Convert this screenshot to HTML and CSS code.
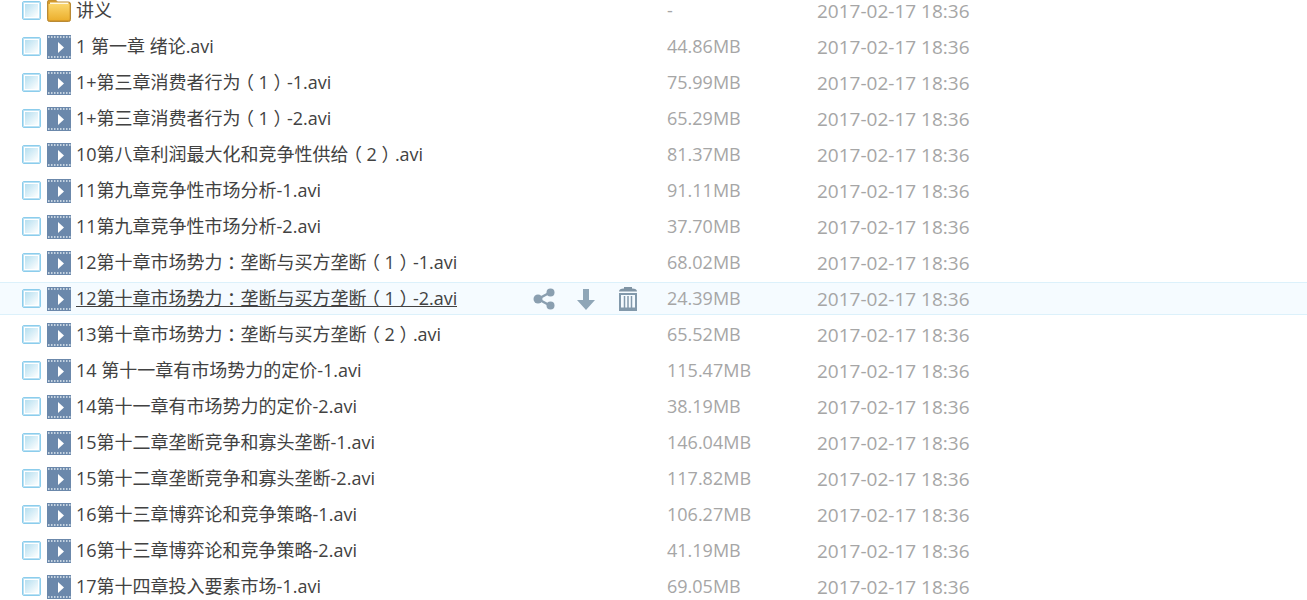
FILE: index.html
```html
<!DOCTYPE html>
<html lang="zh-CN">

<head>
    <meta charset="UTF-8">
    <meta name="viewport" content="width=device-width, initial-scale=1.0">
    <title>文件列表</title>
    <link rel="stylesheet" href="styles.css">
</head>

<body>
    <!-- shared icons -->
    <svg class="sprite" aria-hidden="true">
        <defs>
            <linearGradient id="folder-fill" x1="0" y1="0" x2="0" y2="1">
                <stop offset="0" stop-color="#fbd66c" />
                <stop offset="1" stop-color="#ecb02f" />
            </linearGradient>
        </defs>
        <symbol id="icon-folder" viewBox="0 0 24 24">
            <path d="M.5 3Q.5 1 2.500 1H8.500l2 2H21.500q2 0 2 2V20.500q0 2-2 2H2.500q-2 0-2-2z" fill="#d59a2b" stroke="#b98a35" />
            <path d="M3 3.500h18.500V6H3z" fill="#fff8e0" />
            <path d="M1.500 5H22.500V19.500q0 1.500-1.500 1.500H3q-1.500 0-1.500-1.500z" fill="url(#folder-fill)" />
        </symbol>
        <symbol id="icon-video" viewBox="0 0 24 24">
            <path d="M0 0h24v24H0z" fill="#6b88ab" />
            <path d="M1 2h23M1 22h23" stroke="#e4ebf3" stroke-width="1.500" stroke-dasharray="1.500 1.500" />
            <path d="M11 7l6 5.500-6 5.500z" fill="#fff" />
        </symbol>
    </svg>

    <table class="file-list">
        <colgroup>
            <col class="col-name">
            <col class="col-size">
            <col class="col-date">
        </colgroup>
        <tbody id="files"></tbody>
    </table>

    <template id="actions">
        <div class="actions">
            <button type="button" aria-label="分享">
                <svg viewBox="0 0 22 24"><path d="M17 5.500L5 12l12 6.500" fill="none" stroke="#8a9fb0" stroke-width="2.500" /><circle cx="17.500" cy="5.500" r="4" fill="#8a9fb0" /><circle cx="5" cy="12" r="4.500" fill="#8a9fb0" /><circle cx="17.500" cy="18.500" r="4" fill="#8a9fb0" /></svg>
            </button>
            <button type="button" aria-label="下载">
                <svg viewBox="0 0 22 24"><path d="M8 2h6v11h6l-9 10-9-10h6z" fill="#8fa6b7" /></svg>
            </button>
            <button type="button" aria-label="删除">
                <svg viewBox="0 0 22 24"><path d="M2 4.500Q2 1.500 7 1.500V0h8v1.500q5 0 5 3z" fill="#8094a4" /><path d="M3 7h16v16H3z" fill="#f5fbff" stroke="#8299ab" stroke-width="2" /><path d="M7.500 9v12M11 9v12M14.500 9v12" stroke="#8299ab" stroke-width="1.500" /><path d="M3 21.500h16" stroke="#8299ab" stroke-width="2" /></svg>
            </button>
        </div>
    </template>

    <script src="script.js"></script>
</body>

</html>
```
FILE: styles.css
```css
body {
    margin: 0;
    overflow: hidden;
    background-color: #fff;
    color: #424242;
    font-family: "Open Sans", "Noto Sans CJK SC", sans-serif;
    font-size: 18px;
    line-height: 24px;
}

.sprite {
    position: absolute;
    width: 0;
    height: 0;
}

/* the list is scrolled a little past its first row */
.file-list {
    width: 100%;
    margin-top: -9px;
    table-layout: fixed;
    border-collapse: separate;
    border-spacing: 0 3px;
}

.col-name {
    width: 667px;
}

.col-size {
    width: 150px;
}

.file-list td {
    height: 31px;
    padding: 0;
    border-top: 1px solid transparent;
    border-bottom: 1px solid transparent;
    color: #a6a6a6;
    white-space: nowrap;
}

.file-list .active td {
    border-color: #dcf1fb;
    background-color: #f5fbff;
}

.file-list .size {
    height: 29px;
    padding-bottom: 2px;
}

.file-list .date {
    font-size: 19px;
}

.name-cell {
    display: flex;
    align-items: center;
    padding-left: 22px;
}

.name-cell input {
    appearance: none;
    flex: none;
    box-sizing: border-box;
    width: 19px;
    height: 19px;
    margin: 0 6px 0 0;
    padding: 2px;
    border: 1px solid #8ccdec;
    border-radius: 2px;
    background: linear-gradient(135deg, #b5dff0, #fff) content-box, #fff;
    box-shadow: inset 0 0 0 1px #b9e1f4;
}

.file-icon {
    flex: none;
    width: 24px;
    height: 24px;
    margin-right: 5px;
}

.name-cell a {
    margin-bottom: 2px;
    color: #424242;
    text-decoration: none;
}

/* drawn as a background so the line stays unbroken under the punctuation */
.active a {
    background: linear-gradient(#424242, #424242) left bottom 3px / 100% 1px no-repeat;
}

/* full-width punctuation, centred in its square */
.punct {
    display: inline-block;
    width: 18px;
    text-align: center;
    font-family: "Noto Sans CJK SC", sans-serif;
    font-feature-settings: "halt";
    line-height: 1;
}

.actions {
    display: flex;
    gap: 20px;
    margin-left: auto;
    padding-right: 28px;
}

.actions button {
    width: 22px;
    height: 24px;
    padding: 0;
    border: 0;
    background: none;
}

.actions svg {
    display: block;
    width: 22px;
    height: 24px;
}
```
FILE: script.js
```javascript
const files = [
    ['讲义', '-'],
    ['1 第一章 绪论.avi', '44.86MB'],
    ['1+第三章消费者行为（1）-1.avi', '75.99MB'],
    ['1+第三章消费者行为（1）-2.avi', '65.29MB'],
    ['10第八章利润最大化和竞争性供给（2）.avi', '81.37MB'],
    ['11第九章竞争性市场分析-1.avi', '91.11MB'],
    ['11第九章竞争性市场分析-2.avi', '37.70MB'],
    ['12第十章市场势力：垄断与买方垄断（1）-1.avi', '68.02MB'],
    ['12第十章市场势力：垄断与买方垄断（1）-2.avi', '24.39MB'],
    ['13第十章市场势力：垄断与买方垄断（2）.avi', '65.52MB'],
    ['14 第十一章有市场势力的定价-1.avi', '115.47MB'],
    ['14第十一章有市场势力的定价-2.avi', '38.19MB'],
    ['15第十二章垄断竞争和寡头垄断-1.avi', '146.04MB'],
    ['15第十二章垄断竞争和寡头垄断-2.avi', '117.82MB'],
    ['16第十三章博弈论和竞争策略-1.avi', '106.27MB'],
    ['16第十三章博弈论和竞争策略-2.avi', '41.19MB'],
    ['17第十四章投入要素市场-1.avi', '69.05MB']
];
const activeIndex = 8;
const tbody = document.getElementById('files');

files.forEach(([name, size], i) => {
    const row = document.createElement('tr');
    const icon = name.endsWith('.avi') ? 'video' : 'folder';
    const label = name.replace(/[：（）]/g, '<span class="punct">$&</span>');
    row.innerHTML = `
        <td>
            <div class="name-cell">
                <input type="checkbox" id="file-${i}" aria-label="${name}">
                <svg class="file-icon" aria-hidden="true"><use href="#icon-${icon}" /></svg>
                <a href="#file-${i}">${label}</a>
            </div>
        </td>
        <td class="size">${size}</td>
        <td class="date">2017-02-17 18:36</td>`;
    if (i === activeIndex) {
        row.className = 'active';
        row.querySelector('.name-cell').append(document.getElementById('actions').content.cloneNode(true));
    }
    tbody.append(row);
});
```
